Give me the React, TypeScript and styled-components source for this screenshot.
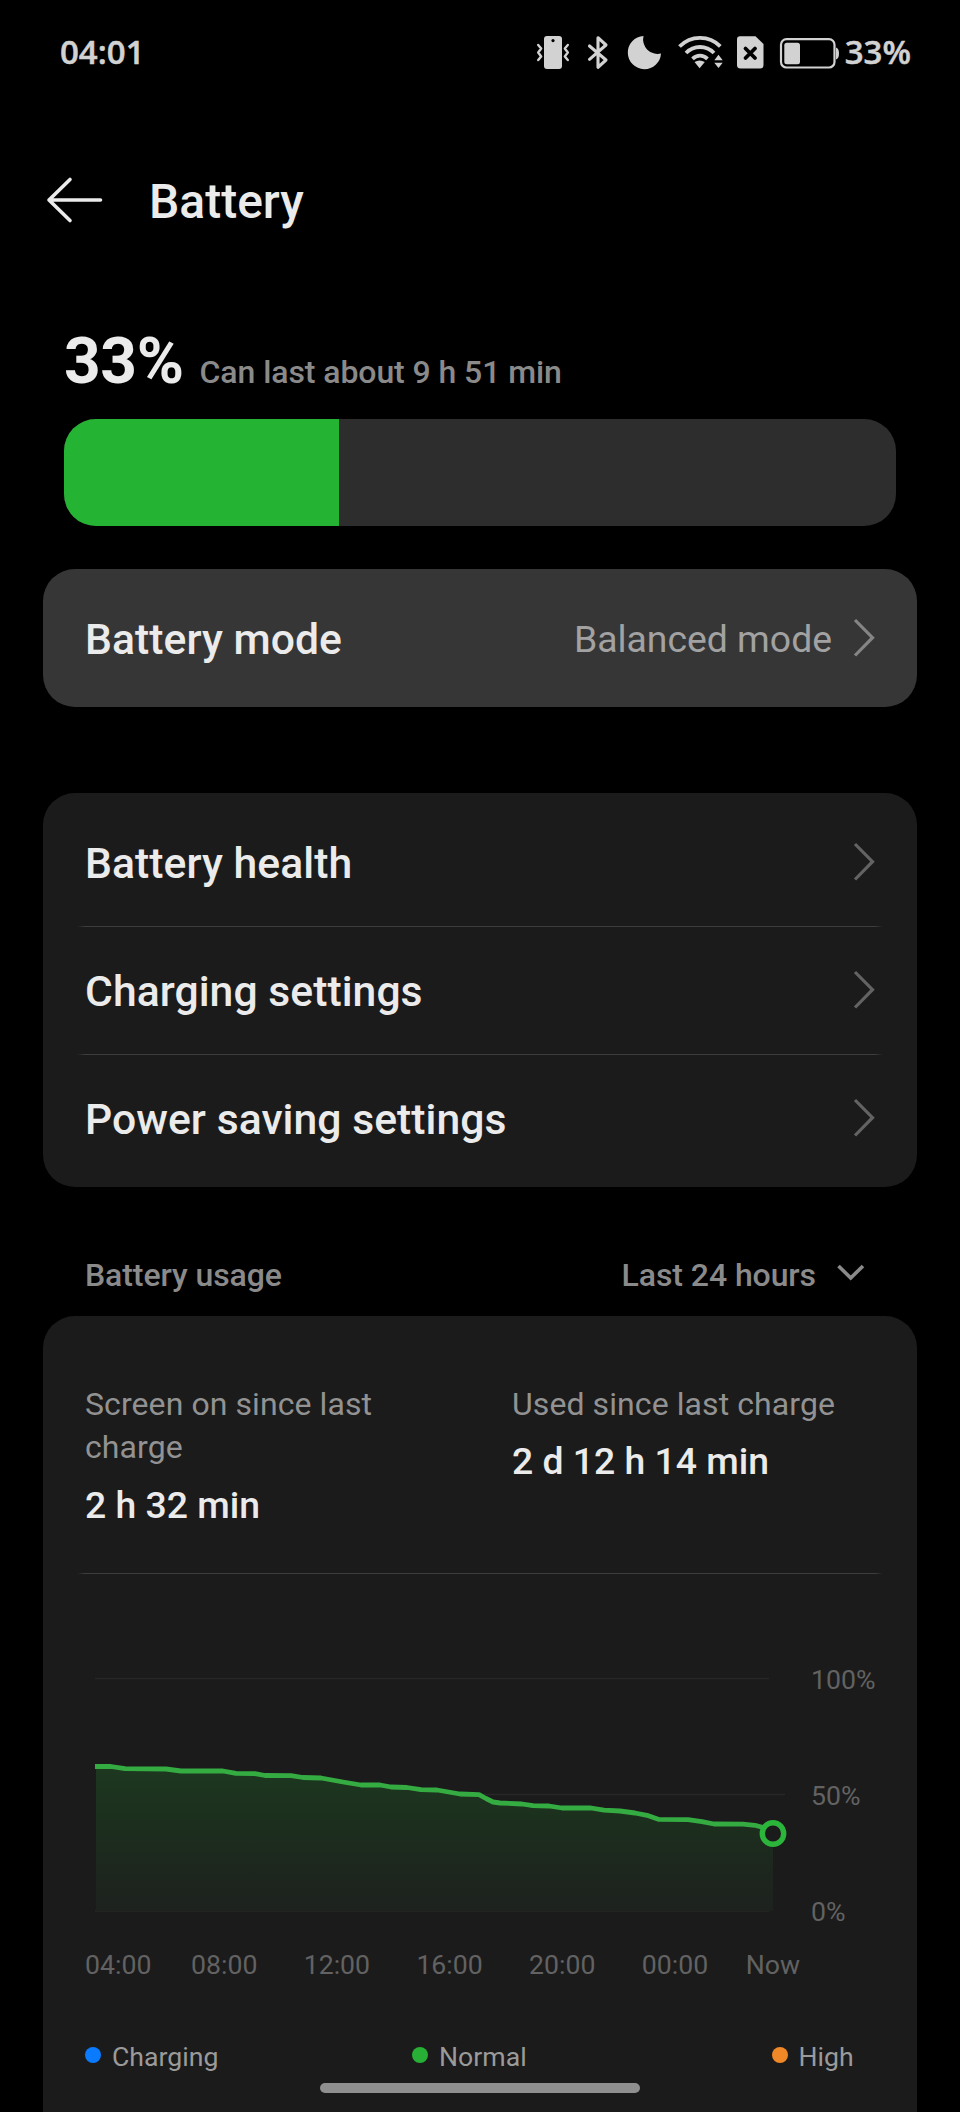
import React from "react";
import styled, { createGlobalStyle } from "styled-components";

const GlobalStyle = createGlobalStyle`
  * { box-sizing: border-box; }
  html, body { margin: 0; padding: 0; background: #000; overflow: hidden; }
  svg { display: block; flex: none; }
`;

const Screen = styled.div`
  position: relative;
  width: 960px;
  height: 2112px;
  overflow: hidden;
  background: #000;
  color: #ebebeb;
  font-family: Roboto, "Liberation Sans", sans-serif;
  display: flex;
  flex-direction: column;
`;

const StatusBar = styled.div`
  flex: none;
  height: 104px;
  padding: 0 49px 0 60px;
  display: flex;
  align-items: center;
  justify-content: space-between;
`;

const StatusText = styled.span`
  font-family: "Open Sans", "Noto Sans", sans-serif;
  font-size: 33px;
  font-weight: 600;
  line-height: 40px;
  color: #d2d2d2;
  -webkit-text-stroke: 0.5px #d2d2d2;
`;

const StatusIcons = styled.div`
  display: flex;
  align-items: center;
  gap: 5px;
`;

const Header = styled.header`
  flex: none;
  height: 192px;
  padding-left: 46px;
  display: flex;
  align-items: center;
  gap: 45px;
`;

const Title = styled.h1`
  margin: 4px 0 0;
  font-size: 48px;
  font-weight: 500;
  line-height: 56px;
`;

const Summary = styled.section`
  flex: none;
  margin: 34px 64px 25px;
  height: 64px;
  display: flex;
  align-items: baseline;
  gap: 16px;
`;

const Percent = styled.span`
  font-size: 64px;
  font-weight: 700;
  line-height: 64px;
  letter-spacing: -0.4px;
`;

const Muted = styled.span`
  font-size: 32px;
  font-weight: 500;
  line-height: 40px;
  letter-spacing: -0.08px;
  color: #8a8a8a;
`;

const LevelTrack = styled.div`
  flex: none;
  margin: 0 64px;
  height: 107px;
  border-radius: 32px;
  background: #2d2d2d;
  overflow: hidden;
`;

const LevelFill = styled.div`
  height: 100%;
  background: #24b333;
`;

const Card = styled.section<{ $bg?: string; $top: number; $pad?: string }>`
  flex: none;
  margin: ${(p) => p.$top}px 43px 0;
  padding: ${(p) => p.$pad ?? "0"};
  border-radius: 32px;
  background: ${(p) => p.$bg ?? "#1b1b1b"};
`;

const Row = styled.div<{ $height: number }>`
  height: ${(p) => p.$height}px;
  padding: 0 42px;
  display: flex;
  align-items: center;
`;

const RowLabel = styled.span`
  flex: 1;
  padding-top: 2px;
  font-size: 42.67px;
  font-weight: 500;
  line-height: 50px;
  letter-spacing: 0.05px;
`;

const RowValue = styled.span`
  margin-right: 21px;
  padding-top: 2px;
  font-size: 37.33px;
  line-height: 44px;
  color: #a2a2a2;
`;

const Divider = styled.div<{ $gap?: number }>`
  height: 1px;
  margin: ${(p) => p.$gap ?? 0}px 34px -1px;
  background: linear-gradient(90deg, transparent, #3d3d3d 8px, #3d3d3d calc(100% - 8px), transparent);
`;

const UsageHeader = styled.div`
  flex: none;
  height: 129px;
  padding: 68px 94px 0 85px;
  display: flex;
  align-items: flex-start;
  justify-content: space-between;
`;

const RangePicker = styled.div`
  display: flex;
  align-items: center;
  gap: 20px;
`;

const UsageCard = styled.section`
  flex: none;
  margin: 0 43px;
  height: 840px;
  padding-top: 67px;
  border-radius: 32px 32px 0 0;
  background: #1b1b1b;
`;

const Stats = styled.div`
  padding: 0 42px;
  display: grid;
  grid-template-columns: 320px 1fr;
  column-gap: 107px;
`;

const StatLabel = styled.div`
  font-size: 32px;
  line-height: 43.3px;
  letter-spacing: 0.08px;
  color: #929292;
`;

const StatValue = styled.div`
  margin-top: 13px;
  font-size: 37.33px;
  font-weight: 500;
  line-height: 44px;
`;

const Chart = styled.div`
  margin: 87px 0 0 52px;
  display: flex;
  align-items: flex-start;
  gap: 22px;
`;

const YAxis = styled.div`
  height: 268px;
  padding-top: 4px;
  display: flex;
  flex-direction: column;
  justify-content: space-between;
`;

const AxisLabel = styled.span`
  font-size: 26.67px;
  line-height: 32px;
  color: #626262;
`;

const XAxis = styled.div`
  margin: 21px 0 0 42px;
  display: grid;
  grid-template-columns: 106px 112.7px 112.7px 112.7px 112.7px 104px auto;
`;

const Legend = styled.div`
  margin: 60px 42px 0;
  display: grid;
  grid-template-columns: 327px 359.5px auto;
`;

const LegendItem = styled.div`
  display: flex;
  align-items: center;
  gap: 11px;
  font-size: 26.67px;
  line-height: 32px;
  color: #9a9a9a;
`;

const Dot = styled.i<{ $color: string }>`
  width: 16px;
  height: 16px;
  margin-bottom: 4px;
  border-radius: 50%;
  background: ${(p) => p.$color};
`;

const HomeIndicator = styled.div`
  position: absolute;
  left: 320px;
  bottom: 19px;
  width: 320px;
  height: 10px;
  border-radius: 5px;
  background: #8f8f8f;
`;

const Chevron = ({ color = "#636363" }: { color?: string }) => (
  <svg width="22" height="40" viewBox="0 0 22 40" fill="none" stroke={color} strokeWidth="3.2">
    <path d="M2 2 19.5 19.700 2 37.500" />
  </svg>
);

const StatusGlyphs = () => (
  <svg width="304" height="40" viewBox="536 32 304 40" fill="#d2d2d2">
    <rect x="544" y="36" width="18" height="33" rx="3" />
    <circle cx="553" cy="40.6" r="1.6" fill="#000" />
    <g fill="none" stroke="#d2d2d2" strokeWidth="2.4" strokeLinejoin="round" strokeLinecap="round">
      <path d="M538.2 45l3 3.5-3 4 3 4-3 3.5M567.8 45l-3 3.5 3 4-3 4 3 3.5" />
    </g>
    <path
      d="M589.5 46 606 60 598 67.3V37.7L606 45 589.5 59.3"
      fill="none"
      stroke="#d2d2d2"
      strokeWidth="3.1"
      strokeLinejoin="round"
      strokeLinecap="round"
    />
    <path d="M643.5 36A14.5 14.5 0 0 0 661 53.5 16.6 16.6 0 1 1 643.5 36Z" />
    <g fill="none" stroke="#d2d2d2" strokeWidth="3.8">
      <path d="M679.5 46.5C691 35 709 35 720.3 46.3" />
      <path d="M686 53C694 45 706 45 714 53" />
      <path d="M692.5 58.8C697 54.6 703 54.6 707.5 58.8" />
    </g>
    <path d="M694.5 62Q699.5 58.8 704.8 62L699.6 68.2ZM714.3 60.2 718.5 54.8 722.7 60.2ZM714.3 62.8 718.5 68 722.7 62.8Z" />
    <path d="M740 36.3H755.5L763.5 44V65Q763.5 68.6 760 68.6H740.5Q737 68.6 737 65V39.5Q737 36.3 740 36.3Z" />
    <path d="M745.5 48.500 755 58M755 48.500 745.5 58" stroke="#000" strokeWidth="3.8" strokeLinecap="round" fill="none" />
    <rect x="781" y="39.2" width="53.5" height="28.3" rx="5.5" fill="none" stroke="#d2d2d2" strokeWidth="2.2" />
    <rect x="784.3" y="42.7" width="15.7" height="21.5" rx="2.5" />
    <path d="M836 47.500Q839 48.500 839 53.500T836 59.500Z" />
  </svg>
);

const levels: [number, number][] = [
  [95, 1766.5], [111, 1766.5], [125, 1768.7], [166, 1769], [181, 1771], [223, 1771],
  [236, 1773.3], [255, 1773.7], [265, 1775.5], [291, 1775.7], [303, 1777.5], [321, 1778],
  [343, 1782], [361, 1785], [380, 1785], [391, 1787], [407, 1787.5], [421, 1789.7],
  [437, 1790], [460, 1794], [479, 1794.7], [486, 1798.5], [493, 1802], [500, 1803],
  [522, 1804], [533, 1805.7], [549, 1806], [562, 1808], [591, 1808], [604, 1810.2],
  [620, 1811], [635, 1813], [647, 1815.3], [659, 1819.4], [688, 1819.7], [702, 1821.7],
  [714, 1824], [743, 1824.2], [755, 1825.3], [773, 1830],
];
const line = levels.map(([x, y]) => `${x},${y}`).join(" ");

const LevelChart = () => (
  <svg width="694" height="264" viewBox="95 1660 694 264">
    <defs>
      <linearGradient id="area" x1="0" y1="1766" x2="0" y2="1911" gradientUnits="userSpaceOnUse">
        <stop offset="0" stopColor="#1d3820" />
        <stop offset="0.35" stopColor="#1c301e" />
        <stop offset="0.7" stopColor="#1d271e" />
        <stop offset="1" stopColor="#1d221e" />
      </linearGradient>
    </defs>
    <path d="M95 1678.500H769M480 1794.500H785M95 1911H769" stroke="#272727" strokeWidth="1.5" />
    <polygon points={`96,1911 96,1766 ${line} 773,1911`} fill="url(#area)" />
    <polyline points={line} fill="none" stroke="#35ac42" strokeWidth="4.8" strokeLinejoin="round" />
    <circle cx="773" cy="1833.5" r="10.7" fill="#1b1b1b" stroke="#2bb53a" strokeWidth="5.4" />
  </svg>
);

const menu = ["Battery health", "Charging settings", "Power saving settings"];
const hours = ["04:00", "08:00", "12:00", "16:00", "20:00", "00:00", "Now"];
const legend = [
  ["Charging", "#0a7bff"],
  ["Normal", "#27b035"],
  ["High", "#f08828"],
];

export default function App() {
  return (
    <Screen>
      <GlobalStyle />
      <StatusBar>
        <StatusText>04:01</StatusText>
        <StatusIcons>
          <StatusGlyphs />
          <StatusText>33%</StatusText>
        </StatusIcons>
      </StatusBar>

      <Header>
        <svg width="58" height="48" viewBox="46 176 58 48" fill="none" stroke="#ebebeb" strokeWidth="3.6" strokeLinecap="round" strokeLinejoin="round">
          <path d="M70 179.500 49 200 70 220.500M49 200H100.5" />
        </svg>
        <Title>Battery</Title>
      </Header>

      <Summary>
        <Percent>33%</Percent>
        <Muted>Can last about 9 h 51 min</Muted>
      </Summary>
      <LevelTrack>
        <LevelFill style={{ width: "33%" }} />
      </LevelTrack>

      <Card $top={43} $bg="#363636">
        <Row $height={138}>
          <RowLabel>Battery mode</RowLabel>
          <RowValue>Balanced mode</RowValue>
          <Chevron color="#858585" />
        </Row>
      </Card>

      <Card $top={86} $pad="5px 0">
        {menu.map((label, i) => (
          <React.Fragment key={label}>
            {i > 0 && <Divider />}
            <Row $height={128}>
              <RowLabel>{label}</RowLabel>
              <Chevron />
            </Row>
          </React.Fragment>
        ))}
      </Card>

      <UsageHeader>
        <Muted>Battery usage</Muted>
        <RangePicker>
          <Muted>Last 24 hours</Muted>
          <svg width="30" height="24" viewBox="836 1263 30 24" fill="none" stroke="#8a8a8a" strokeWidth="3.6">
            <path d="M838.500 1266 850.700 1278 863 1266" />
          </svg>
        </RangePicker>
      </UsageHeader>

      <UsageCard>
        <Stats>
          <div>
            <StatLabel>Screen on since last charge</StatLabel>
            <StatValue>2 h 32 min</StatValue>
          </div>
          <div>
            <StatLabel>Used since last charge</StatLabel>
            <StatValue>2 d 12 h 14 min</StatValue>
          </div>
        </Stats>
        <Divider $gap={46} />
        <Chart>
          <LevelChart />
          <YAxis>
            <AxisLabel>100%</AxisLabel>
            <AxisLabel>50%</AxisLabel>
            <AxisLabel>0%</AxisLabel>
          </YAxis>
        </Chart>
        <XAxis>
          {hours.map((h) => (
            <AxisLabel key={h}>{h}</AxisLabel>
          ))}
        </XAxis>
        <Legend>
          {legend.map(([name, color]) => (
            <LegendItem key={name}>
              <Dot $color={color} />
              {name}
            </LegendItem>
          ))}
        </Legend>
      </UsageCard>
      <HomeIndicator />
    </Screen>
  );
}
